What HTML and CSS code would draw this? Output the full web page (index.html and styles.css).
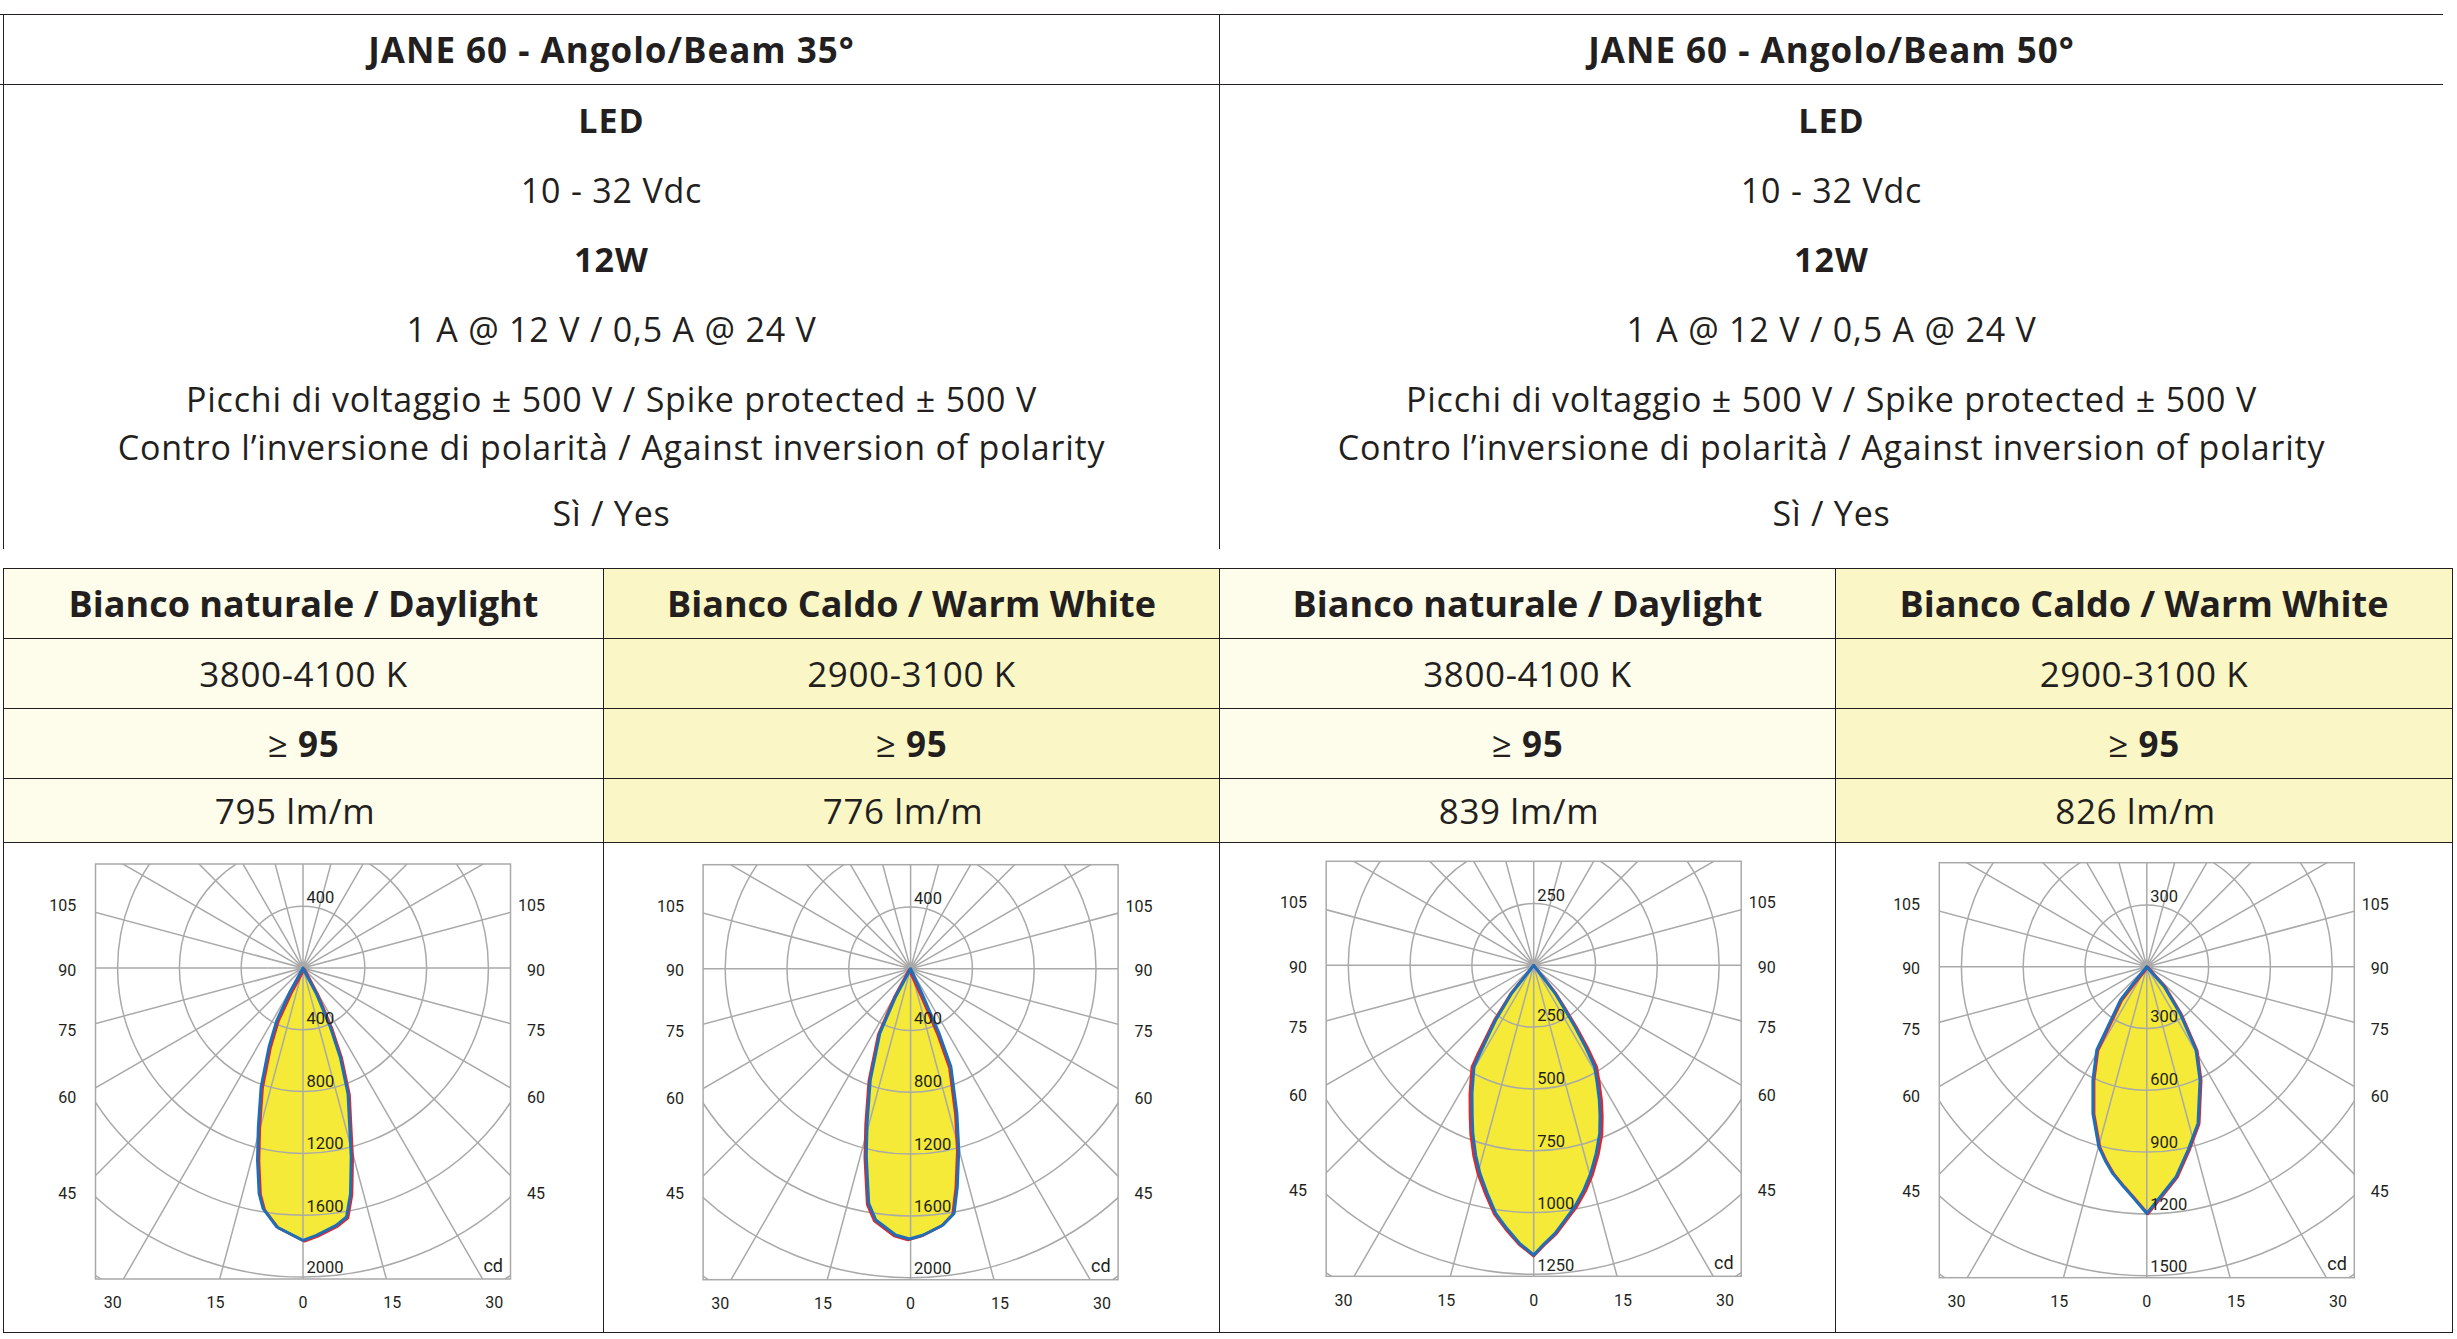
FILE: index.html
```html
<!DOCTYPE html>
<html lang="it">
<head>
<meta charset="utf-8">
<title>JANE 60</title>
<link rel="stylesheet" href="styles.css">
</head>
<body>
<div class="sheet">
  <section class="spec">
    <div class="spec-heads">
      <div class="spec-head">JANE 60 - Angolo/Beam 35°</div>
      <div class="spec-head">JANE 60 - Angolo/Beam 50°</div>
    </div>
    <div class="spec-body">
      <div class="spec-col">
        <div class="spec-row b">LED</div>
        <div class="spec-row">10 - 32 Vdc</div>
        <div class="spec-row b">12W</div>
        <div class="spec-row">1 A @ 12 V / 0,5 A @ 24 V</div>
        <div class="spec-row double">Picchi di voltaggio ± 500 V / Spike protected ± 500 V<br>Contro l’inversione di polarità / Against inversion of polarity</div>
        <div class="spec-row">Sì / Yes</div>
      </div>
      <div class="spec-col">
        <div class="spec-row b">LED</div>
        <div class="spec-row">10 - 32 Vdc</div>
        <div class="spec-row b">12W</div>
        <div class="spec-row">1 A @ 12 V / 0,5 A @ 24 V</div>
        <div class="spec-row double">Picchi di voltaggio ± 500 V / Spike protected ± 500 V<br>Contro l’inversione di polarità / Against inversion of polarity</div>
        <div class="spec-row">Sì / Yes</div>
      </div>
    </div>
  </section>

  <section class="matrix">
    <div class="cell day head">Bianco naturale / Daylight</div>
    <div class="cell warm head">Bianco Caldo / Warm White</div>
    <div class="cell day head">Bianco naturale / Daylight</div>
    <div class="cell warm head">Bianco Caldo / Warm White</div>

    <div class="cell day">3800-4100 K</div>
    <div class="cell warm">2900-3100 K</div>
    <div class="cell day">3800-4100 K</div>
    <div class="cell warm">2900-3100 K</div>

    <div class="cell day">≥ <b>95</b></div>
    <div class="cell warm">≥ <b>95</b></div>
    <div class="cell day">≥ <b>95</b></div>
    <div class="cell warm">≥ <b>95</b></div>

    <div class="cell day lum">795 lm/m</div>
    <div class="cell warm lum">776 lm/m</div>
    <div class="cell day lum">839 lm/m</div>
    <div class="cell warm lum">826 lm/m</div>

    <!-- chart 1 -->
    <div class="cell chart">
      <svg class="polar" viewBox="0 0 599 489" width="599" height="489">
        <defs>
          <clipPath id="box"><rect x="-207.5" y="-104" width="415" height="415"/></clipPath>
          <g id="grid">
            <g class="grid-lines" clip-path="url(#box)">
              <circle r="61.8"/><circle r="123.6"/><circle r="185.4"/><circle r="247.2"/><circle r="309"/><circle r="370.8"/>
              <path d="M0 -450V450 M116.5 434.7L-116.5 -434.7 M225 389.7L-225 -389.7 M318.2 318.2L-318.2 -318.2 M389.7 225L-389.7 -225 M434.7 116.5L-434.7 -116.5 M-450 0H450 M434.7 -116.5L-434.7 116.5 M389.7 -225L-389.7 225 M318.2 -318.2L-318.2 318.2 M225 -389.7L-225 389.7 M116.5 -434.7L-116.5 434.7"/>
            </g>
            <rect class="grid-lines" x="-207.5" y="-104" width="415" height="415"/>
          </g>
          <g id="angles" class="angle-labels">
            <text class="end" x="-226.7" y="-57">105</text>
            <text class="end" x="-226.7" y="7.7">90</text>
            <text class="end" x="-226.7" y="68">75</text>
            <text class="end" x="-226.7" y="135.3">60</text>
            <text class="end" x="-226.7" y="230.7">45</text>
            <text class="end" x="242" y="-57">105</text>
            <text class="end" x="242" y="7.7">90</text>
            <text class="end" x="242" y="68">75</text>
            <text class="end" x="242" y="135.3">60</text>
            <text class="end" x="242" y="230.7">45</text>
            <text class="mid" x="-190.3" y="340.3">30</text>
            <text class="mid" x="-87.5" y="340.3">15</text>
            <text class="mid" x="0" y="340.3">0</text>
            <text class="mid" x="89.3" y="340.3">15</text>
            <text class="mid" x="191.3" y="340.3">30</text>
            <text class="end cd" x="200" y="303.7">cd</text>
          </g>
          <path id="beam1" d="M0 0 L-13 24 L-26.1 52.3 L-34 79 L-41.9 119 L-44.7 159 L-45.5 192.3 L-43.9 225.7 L-39.9 240.7 L-26.1 259 L0 272.3 L13.4 267.3 L33.2 257.3 L43.5 249 L47.5 225.7 L48.2 189 L45 125.7 L37.2 89 L27.3 59 L13.4 25.7 Z"/>
          <path id="beam2" d="M0 0 L-15 28 L-30.8 64.7 L-40.3 111.3 L-43.5 154.7 L-44.3 188 L-41.9 234.7 L-34.8 251.3 L-15 266.3 L-1.2 270.3 L12.7 266.3 L32.4 256.3 L43.5 244.7 L46.7 218 L48.2 181.3 L46.3 144.7 L40.3 98 L28.5 64.7 L12.7 28 Z"/>
          <path id="beam3" d="M0 0 L-22 28 L-38 54.7 L-53.8 88 L-59.7 101.3 L-61.7 128 L-61.5 150 L-60.9 168 L-58 190 L-53.8 208 L-46.5 228 L-38 248 L-27 263 L-14.2 278 L0 289.7 L10 279 L21.4 268 L31 255 L41.1 241.3 L50 225 L57 208 L62.5 188 L66 168 L66.3 150 L65.6 134.7 L63.5 118 L60.9 101.3 L52 82 L41.1 61.3 L31 44 L21.4 28 L10 13 Z"/>
          <path id="beam4" d="M0 0 L-13 16 L-26.2 33.3 L-38 58 L-50 83.3 L-53.9 113.3 L-53.9 146.7 L-48 180 L-41.5 194 L-34.1 206.7 L-24 219 L-14.3 230 L0 246.7 L13.5 230 L29.4 210 L41.3 183.3 L51.2 156.7 L53.2 113.3 L49.2 83.3 L33.3 46.7 L17.5 20 Z"/>
        </defs>
        <g transform="translate(299 125)">
          <use href="#beam1" class="fill"/>
          <use href="#grid"/>
          <use href="#beam1" class="red" transform="translate(1.5 1)"/>
          <use href="#beam1" class="blue"/>
          <use href="#angles"/>
          <g class="scale-labels">
            <text x="3.5" y="-64.7">400</text>
            <text x="3.5" y="55.5">400</text>
            <text x="3.5" y="118.7">800</text>
            <text x="3.5" y="181.3">1200</text>
            <text x="3.5" y="243.7">1600</text>
            <text x="3.5" y="305.3">2000</text>
          </g>
        </g>
      </svg>
    </div>

    <!-- chart 2 -->
    <div class="cell chart">
      <svg class="polar" viewBox="0 0 615 489" width="615" height="489">
        <g transform="translate(306.6 125.7)">
          <use href="#beam2" class="fill"/>
          <use href="#grid"/>
          <use href="#beam2" class="red" transform="translate(-1.5 1)"/>
          <use href="#beam2" class="blue"/>
          <use href="#angles"/>
          <g class="scale-labels">
            <text x="3.5" y="-64.7">400</text>
            <text x="3.5" y="55.5">400</text>
            <text x="3.5" y="118.7">800</text>
            <text x="3.5" y="181.3">1200</text>
            <text x="3.5" y="243.7">1600</text>
            <text x="3.5" y="305.3">2000</text>
          </g>
        </g>
      </svg>
    </div>

    <!-- chart 3 -->
    <div class="cell chart">
      <svg class="polar" viewBox="0 0 615 489" width="615" height="489">
        <g transform="translate(313.7 122.3)">
          <use href="#beam3" class="fill"/>
          <use href="#grid"/>
          <use href="#beam3" class="red" transform="scale(1.035 1.004)"/>
          <use href="#beam3" class="blue"/>
          <use href="#angles"/>
          <g class="scale-labels">
            <text x="3.5" y="-64.7">250</text>
            <text x="3.5" y="55.5">250</text>
            <text x="3.5" y="118.7">500</text>
            <text x="3.5" y="181.3">750</text>
            <text x="3.5" y="243.7">1000</text>
            <text x="3.5" y="305.3">1250</text>
          </g>
        </g>
      </svg>
    </div>

    <!-- chart 4 -->
    <div class="cell chart">
      <svg class="polar" viewBox="0 0 616 489" width="616" height="489">
        <g transform="translate(310.8 123.7)">
          <use href="#beam4" class="fill"/>
          <use href="#grid"/>
          <use href="#beam4" class="red" transform="translate(1.2 0.5)"/>
          <use href="#beam4" class="blue"/>
          <use href="#angles"/>
          <g class="scale-labels">
            <text x="3.5" y="-64.7">300</text>
            <text x="3.5" y="55.5">300</text>
            <text x="3.5" y="118.7">600</text>
            <text x="3.5" y="181.3">900</text>
            <text x="3.5" y="243.7">1200</text>
            <text x="3.5" y="305.3">1500</text>
          </g>
        </g>
      </svg>
    </div>
  </section>
</div>
</body>
</html>
```

FILE: styles.css
```css
* {
  box-sizing: border-box;
}

html, body {
  margin: 0;
  padding: 0;
  background: #ffffff;
}

body {
  color: #231f20;
  font-family: "Open Sans", "DejaVu Sans", sans-serif;
  font-size: 34px;
  letter-spacing: 0.8px;
}

.sheet {
  width: 2457px;
  padding-top: 14px;
}

/* ---------- upper spec table ---------- */
.spec {
  width: 2443px;
}

.spec-heads,
.spec-body {
  display: grid;
  grid-template-columns: 1219px 1224px;
}

.spec-heads {
  border-top: 1px solid #231f20;
  border-bottom: 1px solid #231f20;
}

.spec-head,
.spec-col {
  border-left: 1px solid #231f20;
  text-align: center;
}

.spec-head:first-child,
.spec-col:first-child {
  margin-left: 3px;
}

.spec-head {
  height: 69px;
  line-height: 69px;
  font-weight: 700;
  font-size: 35px;
  letter-spacing: 1px;
}

.spec-col {
  padding-top: 1px;
}

.spec-row {
  height: 69.5px;
  line-height: 69.5px;
  white-space: nowrap;
}

.spec-row.b {
  font-weight: 700;
  letter-spacing: 1px;
}

.spec-row.double {
  height: 115px;
  line-height: 48.3px;
  padding-top: 10.7px;
}

/* ---------- lower colour table ---------- */
.matrix {
  display: grid;
  grid-template-columns: 599px 615px 615px 616px;
  grid-template-rows: 69px 69px 69px 63px 489px;
  gap: 1px;
  padding: 1px;
  width: max-content;
  margin: 19.5px 0 0 3px;
  background: #231f20;
}

.cell {
  text-align: center;
  line-height: 69px;
  font-size: 35px;
  letter-spacing: 0.6px;
  white-space: nowrap;
}

.cell.head {
  font-weight: 700;
  font-size: 36px;
  letter-spacing: 0;
}

.cell b {
  font-weight: 700;
}

.cell.lum {
  line-height: 63px;
  padding-right: 17px;
}

.day {
  background: #fefcea;
}

.warm {
  background: #faf6c6;
}

.chart {
  background: #ffffff;
  line-height: 0;
}

.polar {
  display: block;
}

/* ---------- polar diagrams ---------- */
.grid-lines {
  fill: none;
  stroke: #a9a9a9;
  stroke-width: 1.5;
}

.fill {
  fill: #f4ea37;
  stroke: none;
}

.red {
  fill: none;
  stroke: #e3262b;
  stroke-width: 2.6;
  stroke-linejoin: round;
}

.blue {
  fill: none;
  stroke: #1e6fb7;
  stroke-width: 3;
  stroke-linejoin: round;
}

.angle-labels text,
.scale-labels text {
  font-family: Roboto, "Liberation Sans", sans-serif;
  fill: #231f20;
  letter-spacing: 0;
}

.angle-labels text {
  font-size: 16px;
}

.angle-labels .end {
  text-anchor: end;
}

.angle-labels .mid {
  text-anchor: middle;
}

.angle-labels .cd {
  font-size: 18px;
}

.scale-labels text {
  font-size: 16.5px;
}
```
